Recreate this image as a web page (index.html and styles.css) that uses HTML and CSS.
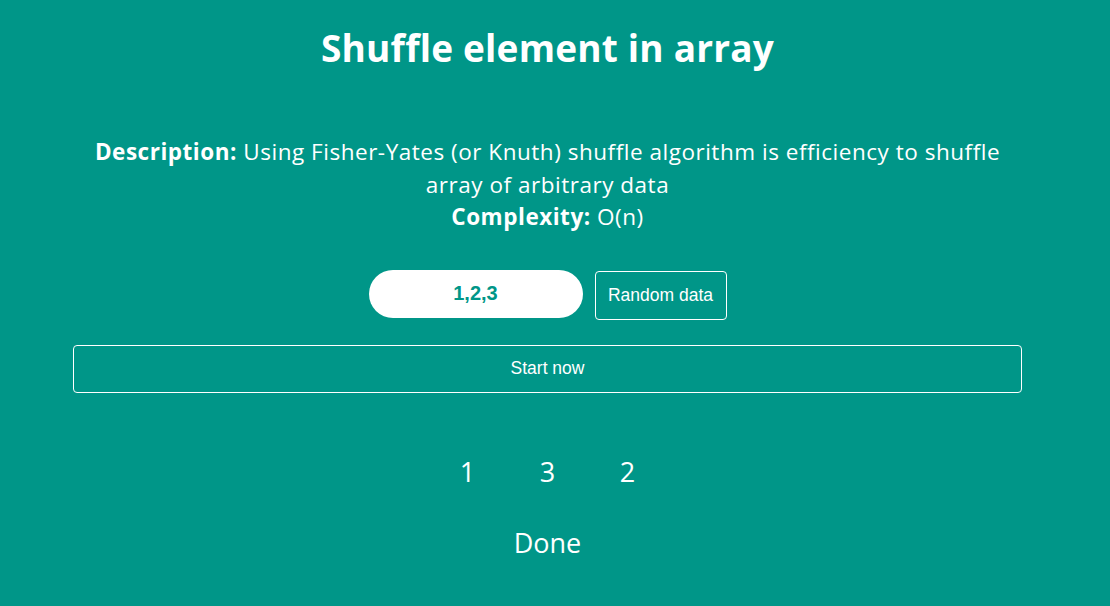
FILE: index.html
```html
<!DOCTYPE html>
<html>
<head>
<meta charset="utf-8">
<link rel="stylesheet" href="styles.css">
</head>
<body>
<div class="page">
  <h1 class="title">Shuffle element in array</h1>
  <div class="desc">
    <p class="line"><b>Description:</b> Using Fisher-Yates (or Knuth) shuffle algorithm is efficiency to shuffle array of arbitrary data</p>
    <p class="line"><b>Complexity:</b> O(n)</p>
  </div>
  <div class="controls">
    <input class="data-input" type="text" value="1,2,3">
    <button class="btn btn-random">Random data</button>
  </div>
  <button class="btn btn-start">Start now</button>
  <div class="result">
    <span class="num">1</span>
    <span class="num">3</span>
    <span class="num">2</span>
  </div>
  <div class="status">Done</div>
</div>
</body>
</html>
```
FILE: styles.css
```css
html, body {
  margin: 0;
  padding: 0;
  background: #009688;
  height: 100%;
  overflow: hidden;
}
.page {
  width: 1095px;
  color: #fff;
  font-family: "Open Sans", "Noto Sans", sans-serif;
  text-align: center;
  display: flex;
  flex-direction: column;
  align-items: center;
}
.title {
  margin: 24px 0 0;
  font-size: 37px;
  line-height: 48px;
  font-weight: 700;
  letter-spacing: 0.2px;
}
.desc {
  margin-top: 64px;
  width: 940px;
  font-size: 22.5px;
  line-height: 32.5px;
  letter-spacing: 0.52px;
}
.line {
  margin: 0;
}
.controls {
  margin-top: 36px;
  display: flex;
  align-items: flex-start;
  gap: 12px;
}
.data-input {
  box-sizing: border-box;
  width: 214px;
  height: 48px;
  border: none;
  border-radius: 24px;
  background: #fff;
  color: #009688;
  font-family: "Liberation Sans", Arial, sans-serif;
  font-weight: 700;
  font-size: 20px;
  text-align: center;
  outline: none;
  padding: 0;
}
.btn {
  box-sizing: border-box;
  background: transparent;
  border: 1px solid #fff;
  border-radius: 4px;
  color: #fff;
  font-family: "Liberation Sans", Arial, sans-serif;
  font-size: 17.5px;
  cursor: pointer;
}
.btn-random {
  width: 132px;
  height: 49px;
  margin-top: 1px;
}
.btn-start {
  margin-top: 25px;
  width: 949px;
  height: 48px;
}
.result {
  margin-top: 61px;
  display: flex;
  gap: 0;
  font-size: 27px;
  line-height: 36px;
}
.num {
  width: 80px;
}
.status {
  margin-top: 35px;
  font-size: 27px;
  line-height: 36px;
}
```
